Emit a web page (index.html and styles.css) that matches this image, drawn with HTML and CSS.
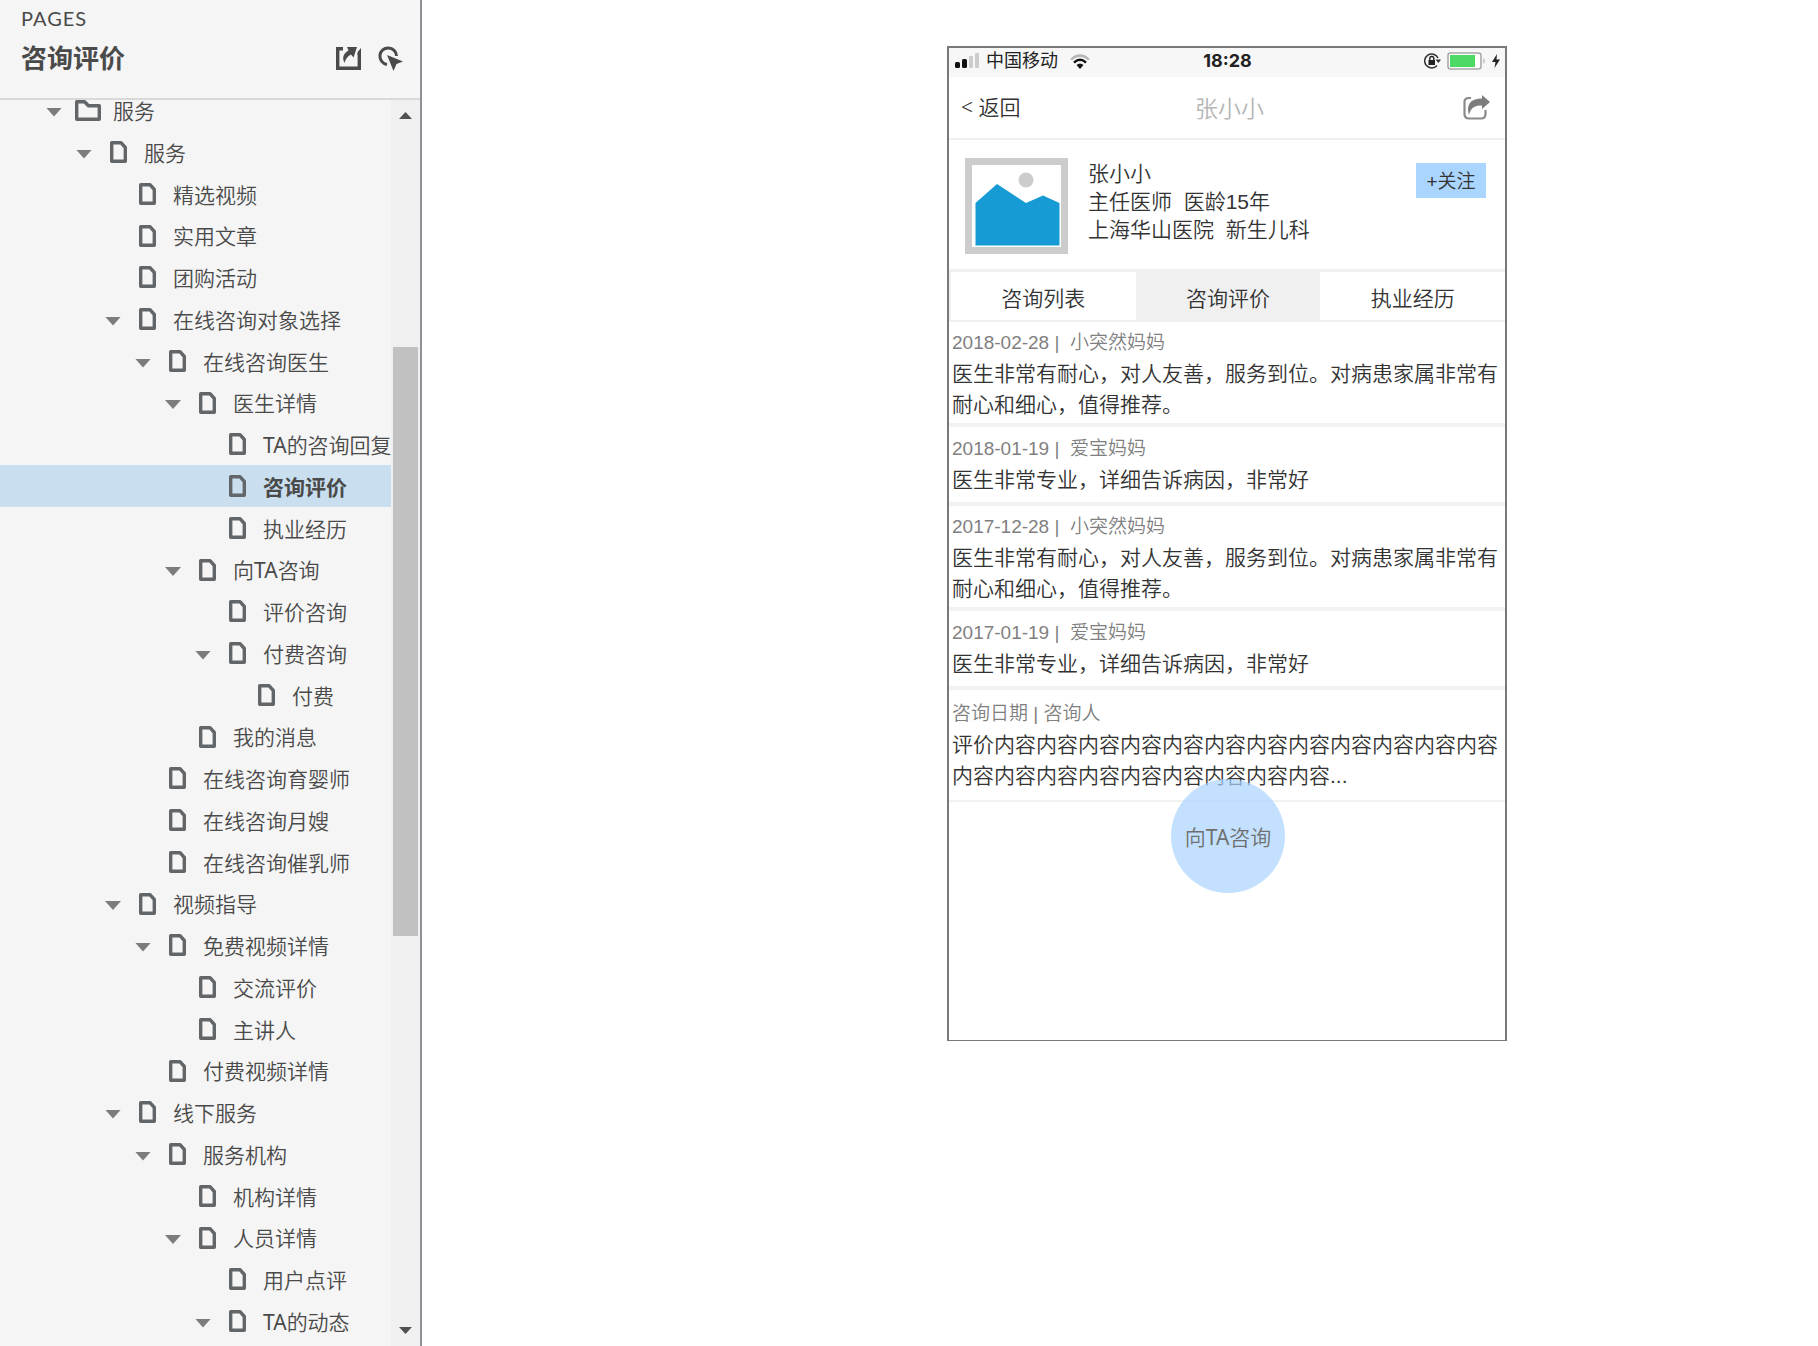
FILE: index.html
```html
<!DOCTYPE html>
<html lang="zh-CN">
<head>
<meta charset="utf-8">
<title>咨询评价</title>
<link rel="stylesheet" href="styles.css">
</head>
<body>
<svg class="defs" aria-hidden="true">
  <symbol id="page" viewBox="0 0 17 22"><path d="M1.700 1.700H11L15.300 6.500V20.300H1.700Z" fill="none" stroke="#626669" stroke-width="3.400" stroke-linejoin="round"/></symbol>
  <symbol id="folder" viewBox="0 0 26 21"><path d="M1.700 1.700H9.500L13.500 5.700H24.300V19.300H1.700Z" fill="none" stroke="#626669" stroke-width="3.400" stroke-linejoin="round"/></symbol>
</svg>
<div class="app">
  <aside class="sidebar">
    <header class="side-head">
      <p class="side-label">PAGES</p>
      <div class="side-title">
        <h1>咨询评价</h1>
        <button class="tool" aria-label="分享"><svg width="25" height="23" viewBox="0 0 25 23"><path d="M7 1.700H1.700V21.300H23.300V6" fill="none" stroke="#4a4a4a" stroke-width="3.400"/><path d="M21.600 5L25 1V8H21.600Z" fill="#4a4a4a"/><path d="M11 0H21L17.500 10.500L15 7.500C11.500 9.500 9.500 12 8.500 16C5.500 10 8 6 12.500 3.500Z" fill="#4a4a4a"/></svg></button>
        <button class="tool" aria-label="高亮交互元素"><svg width="25" height="25" viewBox="0 0 25 25"><path d="M9 18.400A8.300 8.300 0 1 1 18.500 10" fill="none" stroke="#4a4a4a" stroke-width="3"/><path d="M9 9L25 15.500L18.500 18L15.500 25Z" fill="#4a4a4a"/></svg></button>
      </div>
    </header>
    <div class="tree-pane">
      <ul class="tree">
        <li class="l0"><button class="caret" aria-label="折叠"></button><svg class="folder"><use href="#folder"/></svg><a href="#">服务</a></li>
        <li class="l1"><button class="caret" aria-label="折叠"></button><svg class="page"><use href="#page"/></svg><a href="#">服务</a></li>
        <li class="l2"><svg class="page"><use href="#page"/></svg><a href="#">精选视频</a></li>
        <li class="l2"><svg class="page"><use href="#page"/></svg><a href="#">实用文章</a></li>
        <li class="l2"><svg class="page"><use href="#page"/></svg><a href="#">团购活动</a></li>
        <li class="l2"><button class="caret" aria-label="折叠"></button><svg class="page"><use href="#page"/></svg><a href="#">在线咨询对象选择</a></li>
        <li class="l3"><button class="caret" aria-label="折叠"></button><svg class="page"><use href="#page"/></svg><a href="#">在线咨询医生</a></li>
        <li class="l4"><button class="caret" aria-label="折叠"></button><svg class="page"><use href="#page"/></svg><a href="#">医生详情</a></li>
        <li class="l5"><svg class="page"><use href="#page"/></svg><a href="#"><span class="latin">TA</span>的咨询回复</a></li>
        <li class="l5 current"><svg class="page"><use href="#page"/></svg><a href="#" aria-current="page">咨询评价</a></li>
        <li class="l5"><svg class="page"><use href="#page"/></svg><a href="#">执业经历</a></li>
        <li class="l4"><button class="caret" aria-label="折叠"></button><svg class="page"><use href="#page"/></svg><a href="#">向<span class="latin">TA</span>咨询</a></li>
        <li class="l5"><svg class="page"><use href="#page"/></svg><a href="#">评价咨询</a></li>
        <li class="l5"><button class="caret" aria-label="折叠"></button><svg class="page"><use href="#page"/></svg><a href="#">付费咨询</a></li>
        <li class="l6"><svg class="page"><use href="#page"/></svg><a href="#">付费</a></li>
        <li class="l4"><svg class="page"><use href="#page"/></svg><a href="#">我的消息</a></li>
        <li class="l3"><svg class="page"><use href="#page"/></svg><a href="#">在线咨询育婴师</a></li>
        <li class="l3"><svg class="page"><use href="#page"/></svg><a href="#">在线咨询月嫂</a></li>
        <li class="l3"><svg class="page"><use href="#page"/></svg><a href="#">在线咨询催乳师</a></li>
        <li class="l2"><button class="caret" aria-label="折叠"></button><svg class="page"><use href="#page"/></svg><a href="#">视频指导</a></li>
        <li class="l3"><button class="caret" aria-label="折叠"></button><svg class="page"><use href="#page"/></svg><a href="#">免费视频详情</a></li>
        <li class="l4"><svg class="page"><use href="#page"/></svg><a href="#">交流评价</a></li>
        <li class="l4"><svg class="page"><use href="#page"/></svg><a href="#">主讲人</a></li>
        <li class="l3"><svg class="page"><use href="#page"/></svg><a href="#">付费视频详情</a></li>
        <li class="l2"><button class="caret" aria-label="折叠"></button><svg class="page"><use href="#page"/></svg><a href="#">线下服务</a></li>
        <li class="l3"><button class="caret" aria-label="折叠"></button><svg class="page"><use href="#page"/></svg><a href="#">服务机构</a></li>
        <li class="l4"><svg class="page"><use href="#page"/></svg><a href="#">机构详情</a></li>
        <li class="l4"><button class="caret" aria-label="折叠"></button><svg class="page"><use href="#page"/></svg><a href="#">人员详情</a></li>
        <li class="l5"><svg class="page"><use href="#page"/></svg><a href="#">用户点评</a></li>
        <li class="l5"><button class="caret" aria-label="折叠"></button><svg class="page"><use href="#page"/></svg><a href="#"><span class="latin">TA</span>的动态</a></li>
      </ul>
      <div class="scrollbar" aria-hidden="true">
        <svg width="13" height="7" viewBox="0 0 13 7"><path d="M0 7L6.500 0L13 7Z" fill="#505050"/></svg>
        <div class="track"><div class="thumb"></div></div>
        <svg width="13" height="7" viewBox="0 0 13 7"><path d="M0 0L6.500 7L13 0Z" fill="#505050"/></svg>
      </div>
    </div>
  </aside>

  <main class="canvas">
    <section class="phone">
      <div class="status">
        <div class="status-left">
          <svg width="25" height="16" viewBox="0 0 25 16"><rect x="0" y="9" width="5" height="6" rx="1.500" fill="#111"/><rect x="7" y="6" width="5" height="9" rx="1.500" fill="#111"/><rect x="14" y="3" width="4" height="12" rx="1" fill="#ccc"/><rect x="20" y="0" width="4" height="15" rx="1" fill="#ccc"/></svg>
          <span>中国移动</span>
          <svg width="20" height="15" viewBox="0 0 20 15"><path d="M1 5.500Q10 -2.500 19 5.500" fill="none" stroke="#b5b5b5" stroke-width="2.200"/><path d="M4 8.600Q10 3 16 8.600" fill="none" stroke="#111" stroke-width="2.400"/><path d="M6.500 11Q10 8 13.500 11L10 15Z" fill="#111"/></svg>
        </div>
        <strong>18:28</strong>
        <div class="status-right">
          <svg width="17" height="16" viewBox="0 0 17 16"><path d="M14 5A7 7 0 1 0 13 12.500" fill="none" stroke="#333" stroke-width="1.500"/><path d="M11.500 6.500H17L14.500 10Z" fill="#333"/><rect x="4.500" y="7" width="6.500" height="5" fill="#222"/><path d="M5.800 7V5.500a2 2 0 0 1 4 0V7" fill="none" stroke="#222" stroke-width="1.400"/></svg>
          <svg width="39" height="18" viewBox="0 0 39 18"><rect x="1" y="1" width="33" height="16" rx="2.500" fill="#fff" stroke="#a9a9a9" stroke-width="1.600"/><rect x="3" y="3" width="25" height="12" fill="#4cd964"/><path d="M36.500 6Q39 9 36.500 12Z" fill="#a9a9a9"/></svg>
          <svg width="8" height="14" viewBox="0 0 8 14"><path d="M5 0L0 8H3.500L2.500 14L8 5.500H4.500Z" fill="#222"/></svg>
        </div>
      </div>
      <header class="nav">
        <a href="#" class="back">&lt; 返回</a>
        <h2>张小小</h2>
        <button class="share" aria-label="分享"><svg width="27" height="25" viewBox="0 0 27 25"><path d="M8 3H6Q1.500 3 1.500 7V19Q1.500 23.500 6 23.500H18Q22.500 23.500 22.500 19V15" fill="none" stroke="#8a8a8a" stroke-width="2.200"/><path d="M19 0L27 7L19 14V10.500C12 10.500 8 12 6 20C3 10 7 3.500 19 3.500Z" fill="#7d7d7d"/></svg></button>
      </header>
      <div class="profile">
        <svg class="avatar" viewBox="0 0 103 96"><rect x="3.500" y="3.500" width="96" height="89" fill="#fff" stroke="#ccc" stroke-width="7"/><circle cx="61" cy="22" r="7.500" fill="#ccc"/><path d="M10.500 45L32 26L61 45L78 37.500L94.500 45V87.500H10.500Z" fill="#169bd5"/></svg>
        <p>张小小<br>主任医师&nbsp; 医龄15年<br>上海华山医院&nbsp; 新生儿科</p>
        <button class="follow">+关注</button>
      </div>
      <nav class="tabs">
        <a href="#">咨询列表</a>
        <a href="#" class="on">咨询评价</a>
        <a href="#">执业经历</a>
      </nav>
      <article class="review long"><h3>2018-02-28 |&nbsp; 小突然妈妈</h3><p>医生非常有耐心，对人友善，服务到位。对病患家属非常有耐心和细心，值得推荐。</p></article>
      <article class="review"><h3>2018-01-19 |&nbsp; 爱宝妈妈</h3><p>医生非常专业，详细告诉病因，非常好</p></article>
      <article class="review long"><h3>2017-12-28 |&nbsp; 小突然妈妈</h3><p>医生非常有耐心，对人友善，服务到位。对病患家属非常有耐心和细心，值得推荐。</p></article>
      <article class="review"><h3>2017-01-19 |&nbsp; 爱宝妈妈</h3><p>医生非常专业，详细告诉病因，非常好</p></article>
      <article class="review last"><h3>咨询日期 | 咨询人</h3><p>评价内容内容内容内容内容内容内容内容内容内容内容内容内容内容内容内容内容内容内容内容内容...</p></article>
      <button class="ask">向<span class="latin">TA</span>咨询</button>
    </section>
  </main>
</div>
</body>
</html>
```
FILE: styles.css
```css
* { box-sizing: border-box; }

body {
  margin: 0;
  background: #fff;
  color: #333;
  font: 350 21px/31px "Liberation Sans", "Noto Sans CJK SC", sans-serif;
}

h1, h2, h3, p, ul { margin: 0; padding: 0; font-weight: inherit; }
a { color: inherit; text-decoration: none; }
button { padding: 0; border: 0; background: none; color: inherit; font: inherit; }
svg { display: block; flex: none; }
.defs { position: absolute; width: 0; height: 0; }
.latin { font-weight: 400; }

.app { display: flex; height: 100vh; overflow: hidden; }

/* Page tree */
.sidebar {
  display: flex;
  flex-direction: column;
  flex: none;
  width: 422px;
  border-right: 2px solid #8e9297;
  background: #f5f5f5;
  color: #4a4a4a;
  font-family: "Noto Sans", "Noto Sans CJK SC", sans-serif;
}
.side-head {
  flex: none;
  height: 100px;
  padding: 4px 17px 0 21px;
  border-bottom: 2px solid #d9d9d9;
}
.side-label { font: 400 20px/28px Lato, sans-serif; letter-spacing: 1px; }
.side-title { display: flex; align-items: center; gap: 17px; height: 52px; }
.side-title h1 { flex: 1; font-size: 26px; font-weight: 700; }

.tree-pane { display: flex; flex: 1; min-height: 0; overflow: hidden; }
.tree { flex: 1; min-width: 0; margin-top: -11px; overflow: hidden; list-style: none; }
.tree li {
  display: flex;
  align-items: center;
  height: 42px;
  padding-left: var(--indent);
  white-space: nowrap;
}
.tree li:nth-child(4n) { height: 41px; }
.tree a { padding-top: 2px; }
.l0 { --indent: 75px; }
.l1 { --indent: 110px; }
.l2 { --indent: 139px; }
.l3 { --indent: 169px; }
.l4 { --indent: 199px; }
.l5 { --indent: 229px; }
.l6 { --indent: 258px; }
.caret {
  width: 16px;
  height: 9px;
  margin: 4px 18px 0 -34px;
  background: #7c7c7c;
  clip-path: polygon(0 0, 100% 0, 50% 100%);
}
.l0 .caret { margin-left: -29px; margin-right: 13px; }
.page { width: 17px; height: 22px; margin-right: 17px; }
.folder { width: 26px; height: 21px; margin-right: 12px; }
.current { background: #c9dfef; }
.current a { font-weight: 700; }

.scrollbar {
  display: flex;
  flex-direction: column;
  align-items: center;
  flex: none;
  width: 29px;
  padding: 12px 0;
  background: #f0f0f0;
}
.track { flex: 1; width: 25px; padding: 228px 0 391px; }
.thumb { height: 100%; background: #c1c1c1; }

/* Prototype canvas */
.canvas {
  display: grid;
  grid-template-columns: 525fr minmax(auto, 560px) 311fr;
  align-items: start;
  flex: 1;
  padding-top: 46px;
}
.phone {
  position: relative;
  grid-column: 2;
  min-height: 995px;
  border: 2px solid #797979;
  border-bottom-width: 1px;
}

.status {
  display: grid;
  grid-template-columns: 1fr auto 1fr;
  align-items: center;
  height: 29px;
  padding: 0 5px 3px 6px;
  background: #f7f7f7;
  color: #222;
  font-size: 18px;
  font-weight: 400;
  line-height: 26px;
}
.status-left, .status-right { display: flex; align-items: center; gap: 6px; }
.status-left svg:last-child { margin-left: 6px; }
.status-right { justify-content: flex-end; }
.status strong { font: 700 18px/26px Inter, sans-serif; }

.nav {
  display: grid;
  grid-template-columns: 1fr auto 1fr;
  align-items: center;
  height: 63px;
  padding: 0 15px 0 12px;
  border-bottom: 2px solid #efefef;
}
.back { font-family: "Noto Sans", "Noto Sans CJK SC", sans-serif; }
.nav h2 { padding: 3px 0 0 8px; color: #b5b5b5; font-size: 23px; }
.share { justify-self: end; }

.profile { display: flex; align-items: flex-start; height: 129px; padding: 18px 19px 0 16px; }
.avatar { width: 103px; height: 96px; }
.profile p { flex: 1; margin: 2px 0 0 20px; line-height: 28px; }
.follow {
  width: 70px;
  height: 35px;
  margin-top: 5px;
  padding-top: 2px;
  background: #aad5ff;
  font-size: 19px;
}

.tabs {
  display: grid;
  grid-template-columns: repeat(3, 1fr);
  height: 53px;
  border: solid #f0f0f0;
  border-width: 3px 0 2px 2px;
  line-height: 42px;
  text-align: center;
}
.tabs a { padding-top: 6px; }
.tabs .on { background: #f0f0f0; }

.review { padding: 6px 3px 7px; border-bottom: 4px solid #f2f2f2; }
.review.long { padding-top: 5px; padding-bottom: 3px; }
.review.last { padding-top: 8px; padding-bottom: 9px; border-bottom-width: 2px; }
.review h3 { color: #7f7f7f; font-size: 19px; }

.ask {
  position: absolute;
  bottom: 147px;
  left: calc(50% - 56px);
  width: 114px;
  height: 114px;
  padding-top: 2px;
  border-radius: 50%;
  background: #aad5ff;
  opacity: 0.7;
  font-family: "Noto Sans", "Noto Sans CJK SC", sans-serif;
}
```
